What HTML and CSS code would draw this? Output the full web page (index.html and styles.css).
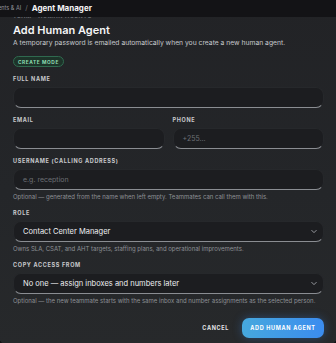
FILE: index.html
```html
<!DOCTYPE html>
<html>
<head>
<meta charset="utf-8">
<link rel="stylesheet" href="styles.css">
</head>
<body>
<header class="topbar">
  <span class="crumb">Agents &amp; AI</span>
  <span class="sep">/</span>
  <span class="crumb-current">Agent Manager</span>
</header>
<main class="modal">
  <div class="overline">Team · Human agents</div>
  <h1 class="title">Add Human Agent</h1>
  <p class="subtitle">A temporary password is emailed automatically when you create a new human agent.</p>
  <div class="pill-row"><span class="pill">Create mode</span></div>

  <div class="field">
    <label class="label">Full name</label>
    <div class="input"></div>
  </div>

  <div class="row">
    <div class="field">
      <label class="label">Email</label>
      <div class="input"></div>
    </div>
    <div class="field">
      <label class="label">Phone</label>
      <div class="input"><span class="placeholder">+255...</span></div>
    </div>
  </div>

  <div class="field">
    <label class="label">Username (calling address)</label>
    <div class="input"><span class="placeholder">e.g. reception</span></div>
    <p class="help">Optional — generated from the name when left empty. Teammates can call them with this.</p>
  </div>

  <div class="field">
    <label class="label">Role</label>
    <div class="input select"><span class="value">Contact Center Manager</span>
      <svg class="chev" viewBox="0 0 8 6" width="6" height="5"><polyline points="1,1.5 4,4.5 7,1.5" fill="none" stroke="#a4a7ac" stroke-width="1.2" stroke-linecap="round" stroke-linejoin="round"/></svg>
    </div>
    <p class="help">Owns SLA, CSAT, and AHT targets, staffing plans, and operational improvements.</p>
  </div>

  <div class="field">
    <label class="label">Copy access from</label>
    <div class="input select"><span class="value">No one — assign inboxes and numbers later</span>
      <svg class="chev" viewBox="0 0 8 6" width="6" height="5"><polyline points="1,1.5 4,4.5 7,1.5" fill="none" stroke="#a4a7ac" stroke-width="1.2" stroke-linecap="round" stroke-linejoin="round"/></svg>
    </div>
    <p class="help">Optional — the new teammate starts with the same inbox and number assignments as the selected person.</p>
  </div>

  <div class="actions">
    <button class="btn-cancel">Cancel</button>
    <button class="btn-primary">Add human agent</button>
  </div>
</main>
</body>
</html>
```

FILE: styles.css
```css
* { box-sizing: border-box; }
html, body { margin: 0; padding: 0; }
body {
  width: 336px;
  height: 343px;
  overflow: hidden;
  background: #17181a;
  font-family: Inter, "Liberation Sans", sans-serif;
  color: #e8e9eb;
}
.topbar {
  position: fixed;
  top: 0; left: 0; right: 0;
  height: 17px;
  background: #131316;
  display: flex;
  align-items: center;
  gap: 4px;
  z-index: 5;
  margin-left: -9px;
  padding-bottom: 2px;
}
.crumb { font-size: 5.5px; color: #8f9197; }
.sep { font-size: 7px; color: #6d7075; }
.crumb-current { font-size: 8px; font-weight: 700; color: #f4f4f5; }

.modal {
  margin-left: -2px;
  width: 340px;
  padding: 12px 14px 9px 15px;
  background: linear-gradient(180deg, #222326 0%, #242629 55%, #27292b 100%);
  border-radius: 0 0 14px 14px;
  box-shadow: 0 6px 20px rgba(0,0,0,0.5);
}
.overline {
  font-size: 5.5px;
  font-weight: 700;
  letter-spacing: 0.12em;
  text-transform: uppercase;
  color: #6a6d72;
  line-height: 8px;
}
.title {
  margin: 3px 0 0;
  font-size: 11px;
  font-weight: 600;
  line-height: 14px;
  color: #f5f5f6;
}
.subtitle {
  margin: 1px 0 0;
  font-size: 6.75px;
  line-height: 10px;
  color: #c6c8cc;
}
.pill-row { margin-top: 8px; display: flex; }
.pill {
  height: 11px;
  padding: 0 4px;
  border-radius: 6px;
  border: 1px solid #2f6a4f;
  background: #1d3329;
  color: #8fdcb2;
  font-size: 4.8px;
  font-weight: 700;
  letter-spacing: 0.12em;
  text-transform: uppercase;
  display: flex;
  align-items: center;
}
.field { display: flex; flex-direction: column; margin-top: 8px; }
.row { display: grid; grid-template-columns: 1fr 1fr; gap: 8px; }
.label {
  font-size: 5.5px;
  font-weight: 700;
  letter-spacing: 0.12em;
  text-transform: uppercase;
  color: #c9cacd;
  line-height: 8px;
  margin-bottom: 4px;
}
.input {
  height: 21px;
  border-radius: 8px;
  background: #1c1d20;
  border: 1px solid #26282b;
  border-bottom: 1px solid #8a8d92;
  display: flex;
  align-items: center;
  padding: 0 9px;
}
.placeholder { font-size: 7px; color: #6c6f75; }
.value { font-size: 7.5px; color: #eeeff1; flex: 1; }
.select { padding-right: 6px; }
.chev { flex: none; }
.help {
  margin: 3px 0 0;
  font-size: 6px;
  line-height: 8px;
  color: #8d9095;
}
.actions {
  margin-top: 13px;
  display: flex;
  justify-content: flex-end;
  align-items: center;
  gap: 5px;
}
button { font-family: inherit; border: 0; cursor: pointer; }
.btn-cancel {
  background: transparent;
  color: #e4e5e7;
  font-size: 5.5px;
  font-weight: 700;
  letter-spacing: 0.12em;
  text-transform: uppercase;
  padding: 0 8px;
  height: 20px;
}
.btn-primary {
  height: 20px;
  width: 82px;
  border-radius: 7px;
  background: linear-gradient(90deg, #46a8de 0%, #3b8cef 100%);
  color: #ffffff;
  font-size: 5.5px;
  font-weight: 700;
  letter-spacing: 0.12em;
  text-transform: uppercase;
  box-shadow: 0 0 10px rgba(59,140,239,0.35);
}
```
